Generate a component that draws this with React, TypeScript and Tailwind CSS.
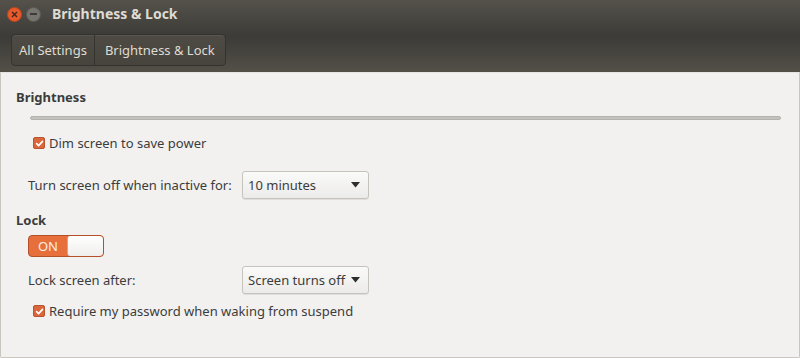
import { useState } from 'react';

function Check({ label }: { label: string }) {
  return (
    <div className="flex items-center h-[16px] gap-[4px] pl-[32px]">
      <div className="w-[12px] h-[12px] rounded-[2px] bg-[#d9673a] border border-[#b85430] flex items-center justify-center">
        <svg width="9" height="9" viewBox="0 0 10 10">
          <path d="M1.8 5.2 L4 7.4 L8.3 2.6" stroke="#fff" strokeWidth="1.8" fill="none" strokeLinecap="round" strokeLinejoin="round" />
        </svg>
      </div>
      <span>{label}</span>
    </div>
  );
}

function Combo({ value }: { value: string }) {
  return (
    <div className="w-[127px] h-[28px] rounded-[3px] border border-[#c6c3bd] bg-gradient-to-b from-[#fafaf9] to-[#ecebe9] shadow-[0_1px_0_rgba(0,0,0,0.08)] flex items-center justify-between pl-[5px] pr-[8px]">
      <span>{value}</span>
      <svg width="9" height="6" viewBox="0 0 9 6">
        <path d="M0 0 H9 L4.5 5.5 Z" fill="#2e2e2e" />
      </svg>
    </div>
  );
}

export default function App() {
  const [on, setOn] = useState(true);
  return (
    <div
      className="w-[800px] h-[358px] flex flex-col text-[13px] leading-[16px] text-[#3c3c3c] bg-[#f2f1f0]"
      style={{ fontFamily: '"Noto Sans", "Open Sans", sans-serif' }}
    >
      {/* Header */}
      <div className="h-[72px] bg-gradient-to-b from-[#55524b] via-[#3c3b37] to-[#535048] flex flex-col">
        <div className="h-[28px] flex items-center pl-[7px]">
          <div className="w-[15px] h-[15px] rounded-full bg-[#e9592a] border border-[#b94620] flex items-center justify-center">
            <svg width="7" height="7" viewBox="0 0 7 7">
              <path d="M1 1 L6 6 M6 1 L1 6" stroke="#3a2a22" strokeWidth="1.4" />
            </svg>
          </div>
          <div className="ml-[4px] w-[15px] h-[15px] rounded-full bg-[#77756f] border border-[#5c5a55] flex items-center justify-center">
            <div className="w-[7px] h-[1.5px] bg-[#3c3b37]" />
          </div>
          <span className="ml-[11px] font-bold text-[#dfdbd2] text-[14px]">Brightness &amp; Lock</span>
        </div>
        <div className="flex items-start pl-[11px] pt-[6px]">
          <div className="flex h-[32px] rounded-[4px] border border-[#35332f] bg-gradient-to-b from-[#4e4b45] to-[#47443e] shadow-[inset_0_1px_0_rgba(255,255,255,0.06)] text-[#dfdbd2]">
            <div className="px-[7px] flex items-center border-r border-[#35332f]">All Settings</div>
            <div className="px-[10px] flex items-center">Brightness &amp; Lock</div>
          </div>
        </div>
      </div>

      {/* Body */}
      <div className="flex-1 border-x border-b border-[#c9c6c0] border-t border-t-[#e7e5e1] rounded-b-[2px] flex flex-col">
        <div className="pl-[15px] pt-[16px] font-bold">Brightness</div>
        <div className="mt-[11px] ml-[29px] mr-[18px] h-[4px] rounded-full bg-[#c4c2be] border border-[#b5b2ad]" />
        <div className="mt-[15px]">
          <Check label="Dim screen to save power" />
        </div>
        <div className="mt-[20px] flex items-center">
          <span className="pl-[27px] w-[241px]">Turn screen off when inactive for:</span>
          <Combo value="10 minutes" />
        </div>
        <div className="pl-[15px] mt-[13px] font-bold">Lock</div>
        <div className="mt-[7px] pl-[27px]">
          <button
            onClick={() => setOn(!on)}
            className="flex w-[76px] h-[22px] rounded-[4px] border border-[#b3502a] bg-[#e76f3c] overflow-hidden"
          >
            <span className="w-[38px] h-full flex items-center justify-center text-[#fdeee6] text-[13px]">ON</span>
            <span className="flex-1 h-full rounded-[3px] bg-gradient-to-b from-[#ffffff] to-[#efeeec] border-l border-[#c0aca2]" />
          </button>
        </div>
        <div className="mt-[9px] flex items-center">
          <span className="pl-[27px] w-[241px]">Lock screen after:</span>
          <Combo value="Screen turns off" />
        </div>
        <div className="mt-[9px]">
          <Check label="Require my password when waking from suspend" />
        </div>
      </div>
    </div>
  );
}
